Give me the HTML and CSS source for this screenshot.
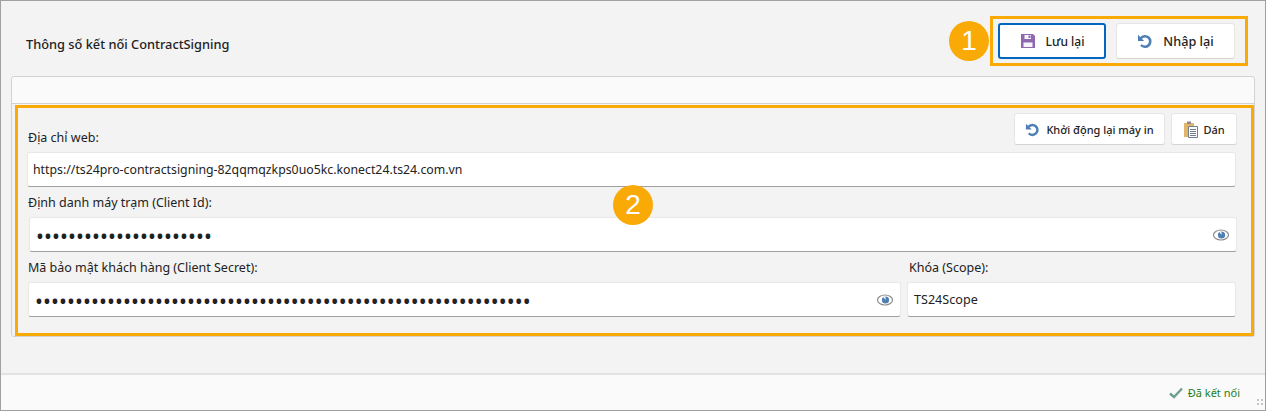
FILE: index.html
```html
<!DOCTYPE html>
<html lang="vi">
<head>
    <meta charset="UTF-8">
    <meta name="viewport" content="width=device-width, initial-scale=1.0">
    <title>Thông số kết nối ContractSigning</title>
    <link rel="stylesheet" href="styles.css">
</head>
<body>
    <div class="window">
        <header class="top-bar">
            <h1 class="page-title">Thông số kết nối ContractSigning</h1>
            <div class="top-actions">
                <span class="mark-circle mark-circle-one">1</span>
                <span class="mark-box mark-box-top"></span>
                <button class="btn btn-large btn-primary">
                    <svg class="icon" width="16" height="16" viewBox="0 0 16 16"><path fill="#9068b0" d="M1 1h12l2 2v12H1z"/><path fill="#f7f5fa" d="M4.500 2h6.500v4H4.500zM3.500 9.500h9V14h-9z"/><path fill="#9068b0" d="M8.500 2.500H10.500V5H8.500z"/></svg>
                    Lưu lại
                </button>
                <button class="btn btn-large btn-reset">
                    <svg class="icon" width="16" height="16" viewBox="0 0 16 16"><path fill="none" stroke="#4d7fb5" stroke-width="2.600" d="M3.800 5.200A5.300 5.300 0 1 1 4 12"/><path fill="#4d7fb5" d="M1 1.800v6.200h6.200z"/></svg>
                    Nhập lại
                </button>
            </div>
        </header>

        <section class="panel">
            <div class="panel-head"></div>
            <div class="panel-body">
                <span class="mark-box mark-box-form"></span>
                <span class="mark-circle mark-circle-two">2</span>

                <div class="url-row">
                    <label class="field-label field-label-url">Địa chỉ web:</label>
                    <div class="tools">
                        <button class="btn btn-small">
                            <svg class="icon" width="15" height="15" viewBox="0 0 16 16"><path fill="none" stroke="#4d7fb5" stroke-width="2.600" d="M3.800 5.200A5.300 5.300 0 1 1 4 12"/><path fill="#4d7fb5" d="M1 1.800v6.200h6.200z"/></svg>
                            Khởi động lại máy in
                        </button>
                        <button class="btn btn-small btn-paste">
                            <svg class="icon" width="16" height="18" viewBox="0 0 16 18"><path fill="#e3b56c" d="M1 3h10v14H1z"/><path fill="#8a8a8a" d="M4 1.500h4V4H4z"/><path fill="#fff" stroke="#6f7f8f" d="M5.500 6.500h9v11h-9z"/><path stroke="#6f7f8f" d="M7 9.500h6M7 11.500h6M7 13.500h6M7 15.500h6"/></svg>
                            Dán
                        </button>
                    </div>
                </div>
                <div class="input input-url">https://ts24pro-contractsigning-82qqmqzkps0uo5kc.konect24.ts24.com.vn</div>

                <label class="field-label field-label-gap">Định danh máy trạm (Client Id):</label>
                <div class="input input-client">
                    <span class="dots">••••••••••••••••••••••</span>
                    <svg class="eye" width="18" height="14" viewBox="0 0 18 14"><ellipse cx="9" cy="7" rx="7.500" ry="5" fill="#fff" stroke="#8a8a8a" stroke-width="1.200"/><circle cx="9.500" cy="7" r="3.600" fill="#4d7fb5"/><path fill="#fff" d="M9.500 7V3.400h-2.500z"/></svg>
                </div>

                <div class="secret-row">
                    <div class="secret-col">
                        <label class="field-label field-label-gap">Mã bảo mật khách hàng (Client Secret):</label>
                        <div class="input input-secret">
                            <span class="dots">••••••••••••••••••••••••••••••••••••••••••••••••••••••••••••••</span>
                            <svg class="eye" width="18" height="14" viewBox="0 0 18 14"><ellipse cx="9" cy="7" rx="7.500" ry="5" fill="#fff" stroke="#8a8a8a" stroke-width="1.200"/><circle cx="9.500" cy="7" r="3.600" fill="#4d7fb5"/><path fill="#fff" d="M9.500 7V3.400h-2.500z"/></svg>
                        </div>
                    </div>
                    <div class="scope-col">
                        <label class="field-label field-label-gap field-label-scope">Khóa (Scope):</label>
                        <div class="input input-scope">TS24Scope</div>
                    </div>
                </div>
            </div>
        </section>

        <footer class="status-bar">
            <svg class="status-check" width="14" height="12" viewBox="0 0 14 12"><path fill="none" stroke="#6f9f92" stroke-width="2.400" d="M1 6.500l4 3.500 8-8.500"/></svg>
            <span class="status-text">Đã kết nối</span>
            <span class="grip"></span>
        </footer>
    </div>
</body>
</html>
```

FILE: styles.css
```css
* {
    box-sizing: border-box;
}

body {
    margin: 0;
    font-family: "Noto Sans", "Open Sans", sans-serif;
    font-size: 12px;
    color: #222;
}

.window {
    display: flex;
    flex-direction: column;
    height: 411px;
    border: 1px solid #a0a0a0;
    background-color: #f3f3f3;
}

.top-bar {
    display: flex;
    align-items: flex-start;
    justify-content: space-between;
    height: 75px;
    padding: 22px 30px 0 25px;
    flex-shrink: 0;
}

.page-title {
    margin: 12px 0 0;
    font-size: 12.800px;
    font-weight: 500;
    line-height: 18px;
}

.top-actions {
    position: relative;
    display: flex;
    gap: 10px;
}

.btn {
    display: flex;
    align-items: center;
    justify-content: center;
    border: 1px solid #e6e6e6;
    border-bottom-color: #d4d4d4;
    border-radius: 3px;
    background-color: #fff;
    color: #222;
    font-family: inherit;
    font-weight: 500;
}

.btn-large {
    gap: 10px;
    width: 119px;
    height: 36px;
    font-size: 12px;
}

.btn-primary {
    width: 108px;
    border: 2px solid #0067c0;
}

.btn-reset {
    font-size: 12.700px;
}

.btn-small {
    gap: 6px;
    width: 151px;
    height: 32px;
    font-size: 11px;
}

.btn-paste {
    gap: 4px;
    width: 66px;
}

.panel {
    display: flex;
    flex-direction: column;
    height: 261px;
    margin: 0 10px;
    border: 1px solid #d2d2d2;
    border-radius: 3px;
}

.panel-head {
    height: 27px;
    border-bottom: 1px solid #d2d2d2;
    background-color: #fafafa;
    border-radius: 3px 3px 0 0;
    flex-shrink: 0;
}

.panel-body {
    position: relative;
    flex: 1;
    padding: 9px 18px 0 16px;
}

.url-row {
    display: flex;
    align-items: flex-end;
    justify-content: space-between;
    height: 32px;
}

.tools {
    display: flex;
    gap: 6px;
    margin-right: -1px;
}

.field-label {
    display: block;
    font-size: 12.500px;
    line-height: 17px;
}

.field-label-url {
    margin-bottom: -1px;
}

.field-label-gap {
    margin: 7px 0 6px;
}

.field-label-scope {
    margin-left: 2px;
}

.input {
    display: flex;
    align-items: center;
    justify-content: space-between;
    height: 35px;
    padding: 0 6px;
    border: 1px solid #e8e8e8;
    border-bottom: 1px solid #a0a0a0;
    border-radius: 3px;
    background-color: #fff;
    font-size: 12.300px;
}

.input-url {
    margin: 7px 0 0 -1px;
    padding-left: 5px;
}

.input-client {
    margin: 0 -1px 0 1px;
}

.input-scope {
    font-size: 12.600px;
}

.dots {
    padding-top: 3px;
    font-size: 21px;
    line-height: 1;
    letter-spacing: 0.100px;
    color: #222;
}

.eye {
    flex-shrink: 0;
}

.secret-row {
    display: flex;
    gap: 6px;
}

.secret-col {
    width: 873px;
}

.scope-col {
    flex: 1;
}

.status-bar {
    display: flex;
    align-items: center;
    justify-content: flex-end;
    gap: 5px;
    height: 37px;
    margin-top: auto;
    padding-right: 25px;
    border-top: 2px solid #e2e2e2;
    background-color: #fafafa;
    position: relative;
}

.status-text {
    color: #1a7f1a;
    font-size: 11px;
}

.grip {
    position: absolute;
    right: 1px;
    bottom: 4px;
    width: 8px;
    height: 8px;
    background-image: radial-gradient(#c4c4c4 1.200px, transparent 1.300px);
    background-size: 4px 4px;
}

.mark-box {
    position: absolute;
    border: 3px solid #f9aa07;
    pointer-events: none;
}

.mark-box-top {
    top: -7px;
    left: -8px;
    right: -13px;
    height: 50px;
}

.mark-box-form {
    top: 1px;
    left: 3px;
    right: 0;
    height: 231px;
}

.mark-circle {
    position: absolute;
    display: flex;
    align-items: center;
    justify-content: center;
    width: 40px;
    height: 40px;
    border-radius: 50%;
    background-color: #f9aa07;
    color: #fff;
    font-family: "Liberation Sans", Arial, sans-serif;
    font-size: 28px;
}

.mark-circle-one {
    top: -2px;
    left: -49px;
}

.mark-circle-two {
    top: 81px;
    left: 601px;
}
```
